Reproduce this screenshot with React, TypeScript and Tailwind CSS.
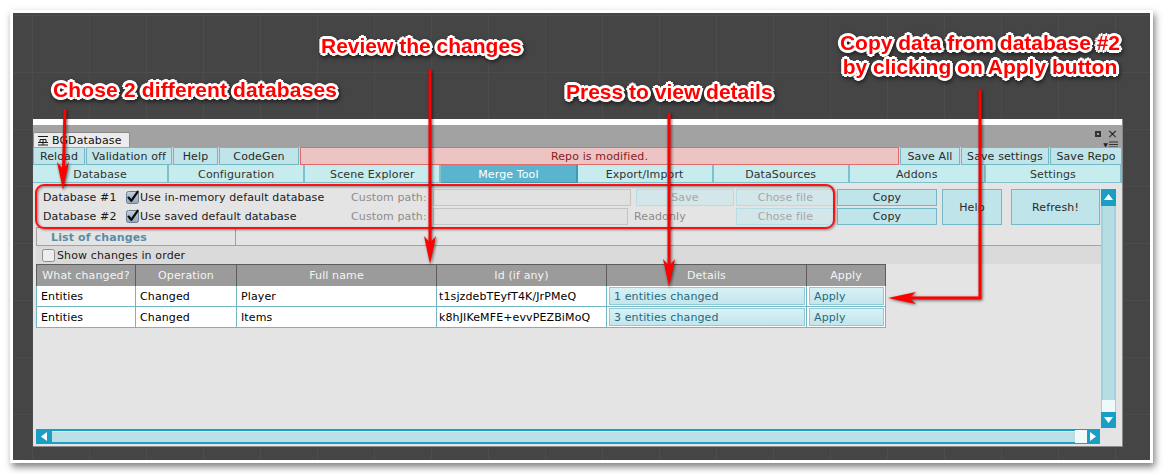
import clsx from 'clsx';

const tabs = ['Database', 'Configuration', 'Scene Explorer', 'Merge Tool', 'Export/Import', 'DataSources', 'Addons', 'Settings'];

const changes = [
  { what: 'Entities', op: 'Changed', name: 'Player', id: 't1sjzdebTEyfT4K/JrPMeQ', details: '1 entities changed' },
  { what: 'Entities', op: 'Changed', name: 'Items', id: 'k8hJIKeMFE+evvPEZBiMoQ', details: '3 entities changed' },
];

const btn = 'flex items-center justify-center border border-[#74b8c6] bg-[#bfe4e9] text-[#2a2a2a] whitespace-nowrap';
const btnOff = 'flex items-center justify-center border border-[#b6dde4] bg-[#d3e7eb] text-[#a6a6a6] whitespace-nowrap';
const field = 'h-full border border-[#c4c4c4] bg-[#e1e1e1]';

const CheckBox = ({ on }: { on: boolean }) => (
  <svg width="13" height="13" viewBox="0 0 13 13" className="shrink-0 overflow-visible">
    <defs>
      <linearGradient id="chk" x1="0" y1="0" x2="0" y2="1">
        <stop offset="0" stopColor="#c3d0de" />
        <stop offset="1" stopColor="#93a7bd" />
      </linearGradient>
    </defs>
    <rect x="0.5" y="0.5" width="12" height="12" rx="2" fill={on ? 'url(#chk)' : '#ededed'} stroke={on ? '#6d7e92' : '#8e8e8e'} />
    {on && (
      <path d="M2.6 6.6 L5.3 9.8 L11.6 0.8" fill="none" stroke="#0c0c0c" strokeWidth="2.3" strokeLinecap="round" strokeLinejoin="round" />
    )}
  </svg>
);

const Tri = ({ dir }: { dir: 'up' | 'down' | 'left' | 'right' }) => {
  const d = {
    up: 'M1 8 L5.5 2 L10 8 Z',
    down: 'M1 2 L5.5 8 L10 2 Z',
    left: 'M8 1 L2 5.5 L8 10 Z',
    right: 'M2 1 L8 5.5 L2 10 Z',
  }[dir];
  return (
    <svg width="11" height="11" viewBox="0 0 11 11">
      <path d={d} fill="#ffffff" />
    </svg>
  );
};

const TitleBar = () => (
  <div className="h-[22px] bg-[#a2a2a2] flex items-end">
    <div className="w-[97px] h-[15px] bg-[#ececec] border border-b-0 border-[#8c8c8c] rounded-t-[2px] flex items-center pl-[3px] gap-[3px] text-[#111]">
      <svg width="12" height="11" viewBox="0 0 12 11">
        <path d="M1 1.5h10M3 4.5h6M1 7.5h10M1 10h10M6 4.5v5.5M3 4.5v3M9 4.5v3" stroke="#1a1a1a" strokeWidth="1" fill="none" />
      </svg>
      <span>BGDatabase</span>
    </div>
    <div className="ml-auto self-stretch flex flex-col items-end pr-[4px] pt-[2px] text-[#222] leading-none">
      <div className="flex items-center gap-[6px]">
        <span className="w-[6px] h-[6px] border-2 border-[#333]" />
        <span className="text-[13px]">×</span>
      </div>
      <div className="flex items-center gap-[1px] mt-[1px]">
        <span className="text-[6px]">▼</span>
        <svg width="9" height="7" viewBox="0 0 9 7">
          <path d="M0 1h9M0 3.5h9M0 6h9" stroke="#333" strokeWidth="1.2" />
        </svg>
      </div>
    </div>
  </div>
);

const Toolbar = () => (
  <div className="h-[18px] flex gap-[1px] bg-[#d3dcde]">
    <div className={clsx(btn, 'w-[52px]')}>Reload</div>
    <div className={clsx(btn, 'w-[86px]')}>Validation off</div>
    <div className={clsx(btn, 'w-[45px]')}>Help</div>
    <div className={clsx(btn, 'w-[80px]')}>CodeGen</div>
    <div className="flex-1 flex items-center justify-center border border-[#e36a6a] bg-[#ecc4c4] text-[#8a1a1a]">
      Repo is modified.
    </div>
    <div className={clsx(btn, 'w-[60px]')}>Save All</div>
    <div className={clsx(btn, 'w-[88px]')}>Save settings</div>
    <div className={clsx(btn, 'w-[72px]')}>Save Repo</div>
  </div>
);

const Tabs = () => (
  <div className="h-[18px] flex">
    {tabs.map((t) => (
      <div
        key={t}
        className={clsx(
          'flex-1 flex items-center justify-center pt-[1px] border-r-2 border-b',
          t === 'Merge Tool'
            ? 'bg-[#5bb4ce] text-white border-[#3f9bb5]'
            : 'bg-[#c6ecee] text-[#333] border-[#80c0cd]'
        )}
      >
        {t}
      </div>
    ))}
  </div>
);

const DbSettings = () => (
  <div className="flex">
    <div className="flex flex-col gap-[2px]">
      <div className="h-[17px] flex items-center pl-[7px]">
        <span className="w-[83px] text-[#1a1a1a]">Database #1</span>
        <CheckBox on />
        <span className="w-[211px] ml-[1px] text-[#1a1a1a]">Use in-memory default database</span>
        <span className="w-[82px] text-[#8c8c8c]">Custom path:</span>
        <div className={clsx(field, 'w-[198px]')} />
        <div className={clsx(btnOff, 'h-full w-[98px] ml-[5px]')}>Save</div>
        <div className={clsx(btnOff, 'h-full w-[99px] ml-[2px]')}>Chose file</div>
        <div className={clsx(btn, 'h-full w-[100px] ml-[2px]')}>Copy</div>
      </div>
      <div className="h-[17px] flex items-center pl-[7px]">
        <span className="w-[83px] text-[#1a1a1a]">Database #2</span>
        <CheckBox on />
        <span className="w-[211px] ml-[1px] text-[#1a1a1a]">Use saved default database</span>
        <span className="w-[82px] text-[#8c8c8c]">Custom path:</span>
        <div className={clsx(field, 'w-[195px]')} />
        <span className="w-[108px] pl-[6px] text-[#8c8c8c]">Readonly</span>
        <div className={clsx(btnOff, 'h-full w-[99px]')}>Chose file</div>
        <div className={clsx(btn, 'h-full w-[100px] ml-[2px]')}>Copy</div>
      </div>
    </div>
    <div className={clsx(btn, 'w-[60px] h-[36px] ml-[5px]')}>Help</div>
    <div className={clsx(btn, 'w-[89px] h-[36px] ml-[9px]')}>Refresh!</div>
  </div>
);

const ChangesTable = () => (
  <div className="w-[850px] grid grid-cols-[100px_101px_200px_170px_200px_79px]">
    {['What changed?', 'Operation', 'Full name', 'Id (if any)', 'Details', 'Apply'].map((h) => (
      <div key={h} className="h-[22px] flex items-center justify-center bg-[#9b9b9b] text-[#f4f4f4] border-r border-[#5c5c5c] border-t first:border-l">
        {h}
      </div>
    ))}
    {changes.map((c) => (
      <div key={c.id} className="contents">
        <div className="h-[21px] flex items-center pl-[4px] bg-white text-black border-l border-r border-b border-[#72b6c6]">{c.what}</div>
        <div className="h-[21px] flex items-center pl-[4px] bg-white text-black border-r border-b border-[#72b6c6]">{c.op}</div>
        <div className="h-[21px] flex items-center pl-[4px] bg-white text-black border-r border-b border-[#72b6c6]">{c.name}</div>
        <div className="h-[21px] flex items-center pl-[2px] bg-white text-black border-r border-b border-[#72b6c6]">{c.id}</div>
        <div className="h-[21px] p-[1px] pl-[2px] bg-white border-r border-b border-[#72b6c6]">
          <div className="h-full flex items-center pl-[4px] border border-[#8ecad6] bg-[linear-gradient(#d8f1f5,#c3e5eb)] text-[#1f6a80]">
            {c.details}
          </div>
        </div>
        <div className="h-[21px] p-[1px] pl-[2px] bg-white border-r border-b border-[#72b6c6]">
          <div className="h-full flex items-center pl-[4px] border border-[#8ecad6] bg-[linear-gradient(#d8f1f5,#c3e5eb)] text-[#1f6a80]">
            Apply
          </div>
        </div>
      </div>
    ))}
  </div>
);

const VScroll = () => (
  <div className="w-[15px] h-[239px] flex flex-col">
    <div className="h-[17px] bg-[#1b9ec6] flex items-center justify-center">
      <Tri dir="up" />
    </div>
    <div className="flex-1 bg-[#b7dde4] border-x-2 border-[#9fd2dc]" />
    <div className="h-[12px] bg-[#eef9fb] border-x border-[#9fd2dc]" />
    <div className="h-[16px] bg-[#1b9ec6] flex items-center justify-center">
      <Tri dir="down" />
    </div>
  </div>
);

const HScroll = () => (
  <div className="w-[1064px] h-[15px] flex bg-[#1b9ec6]">
    <div className="w-[16px] flex items-center justify-center">
      <Tri dir="left" />
    </div>
    <div className="flex-1 my-[2px] bg-[#bcdfe5] border-t border-[#d6eef2]" />
    <div className="w-[12px] my-[1px] bg-[#f0fafb]" />
    <div className="w-[13px] flex items-center justify-center">
      <Tri dir="right" />
    </div>
  </div>
);

const UnityWindow = () => (
  <div className="w-[1090px] h-[328px] flex flex-col bg-[#e4e4e4] border-r border-b border-[#8a8a8a] font-['DejaVu_Sans',sans-serif] text-[11px] tracking-[0.12px] leading-none">
    <div className="h-[6px] bg-white" />
    <TitleBar />
    <Toolbar />
    <Tabs />
    <div className="flex-1 flex flex-col pl-[3px] pt-[6px] pb-[2px]">
      <div className="h-[240px] flex">
        <div className="w-[1065px] flex flex-col">
          <DbSettings />
          <div className="mt-[2px] w-[200px] h-[18px] border-t border-x border-[#a0a0a0] flex items-center pl-[14px] pt-[2px] font-bold text-[#5b8ca6]">
            List of changes
          </div>
          <div className="h-[19px] flex items-center gap-[2px] pl-[6px] bg-[#dadada] border-t border-[#a2a2a2] text-[#1a1a1a]">
            <CheckBox on={false} />
            <span>Show changes in order</span>
          </div>
          <ChangesTable />
        </div>
        <VScroll />
      </div>
      <HScroll />
    </div>
  </div>
);

const labelCls =
  "absolute whitespace-nowrap font-['Liberation_Sans',Arial,sans-serif] font-bold text-[21px] leading-[24px] text-[#ff0000] [text-shadow:2px_0_0_#fff,-2px_0_0_#fff,0_2px_0_#fff,0_-2px_0_#fff,2px_2px_0_#fff,-2px_-2px_0_#fff,2px_-2px_0_#fff,-2px_2px_0_#fff,3px_0_0_#fff,-3px_0_0_#fff,0_3px_0_#fff,0_-3px_0_#fff] [filter:drop-shadow(1px_2px_2px_rgba(0,0,0,0.55))]";

const downHead = (x: number, y: number) => `${x},${y} ${x - 6},${y - 28} ${x},${y - 21} ${x + 6},${y - 28}`;

const Annotations = () => (
  <div className="absolute inset-0 pointer-events-none">
    <div className="absolute left-[35px] top-[184px] w-[800px] h-[45px] border-2 border-[#ff1010] rounded-[9px] [filter:drop-shadow(1px_1px_1px_rgba(0,0,0,0.45))]" />
    <svg width="1164" height="474" className="absolute left-0 top-0 [filter:drop-shadow(1px_1px_1.5px_rgba(0,0,0,0.6))]">
      <g stroke="#ff0000" strokeWidth="3" fill="none">
        <path d="M65 109 L63.5 170" />
        <path d="M430 70 L430 245" />
        <path d="M669 113 L669 268" />
        <path d="M980 90 L980 298 L905 298" />
      </g>
      <g fill="#ff0000">
        <polygon points={downHead(63, 190)} />
        <polygon points={downHead(430, 264)} />
        <polygon points={downHead(669, 287)} />
        <polygon points="888,298 916,292 909,298 916,304" />
      </g>
    </svg>
    <div className={clsx(labelCls, 'left-[53px] top-[78px] tracking-[0.15px]')}>Chose 2 different databases</div>
    <div className={clsx(labelCls, 'left-[321px] top-[34px]')}>Review the changes</div>
    <div className={clsx(labelCls, 'left-[566px] top-[80px]')}>Press to view details</div>
    <div className={clsx(labelCls, 'left-[830px] top-[31px] w-[300px] text-center')}>
      Copy data from database #2
      <br />
      by clicking on Apply button
    </div>
  </div>
);

export default function App() {
  return (
    <div className="relative w-[1164px] h-[474px] overflow-hidden bg-white">
      <div className="pl-[10px] pt-[10px]">
        <div className="w-[1143px] h-[453px] border-[3px] border-white shadow-[2px_4px_7px_rgba(0,0,0,0.5)] bg-[#454545] bg-[linear-gradient(90deg,#4c4c4c_1px,transparent_1px),linear-gradient(#4c4c4c_1px,transparent_1px)] [background-size:57px_57px] [background-position:19px_2px] pl-[20px] pt-[106px]">
          <UnityWindow />
        </div>
      </div>
      <Annotations />
    </div>
  );
}
